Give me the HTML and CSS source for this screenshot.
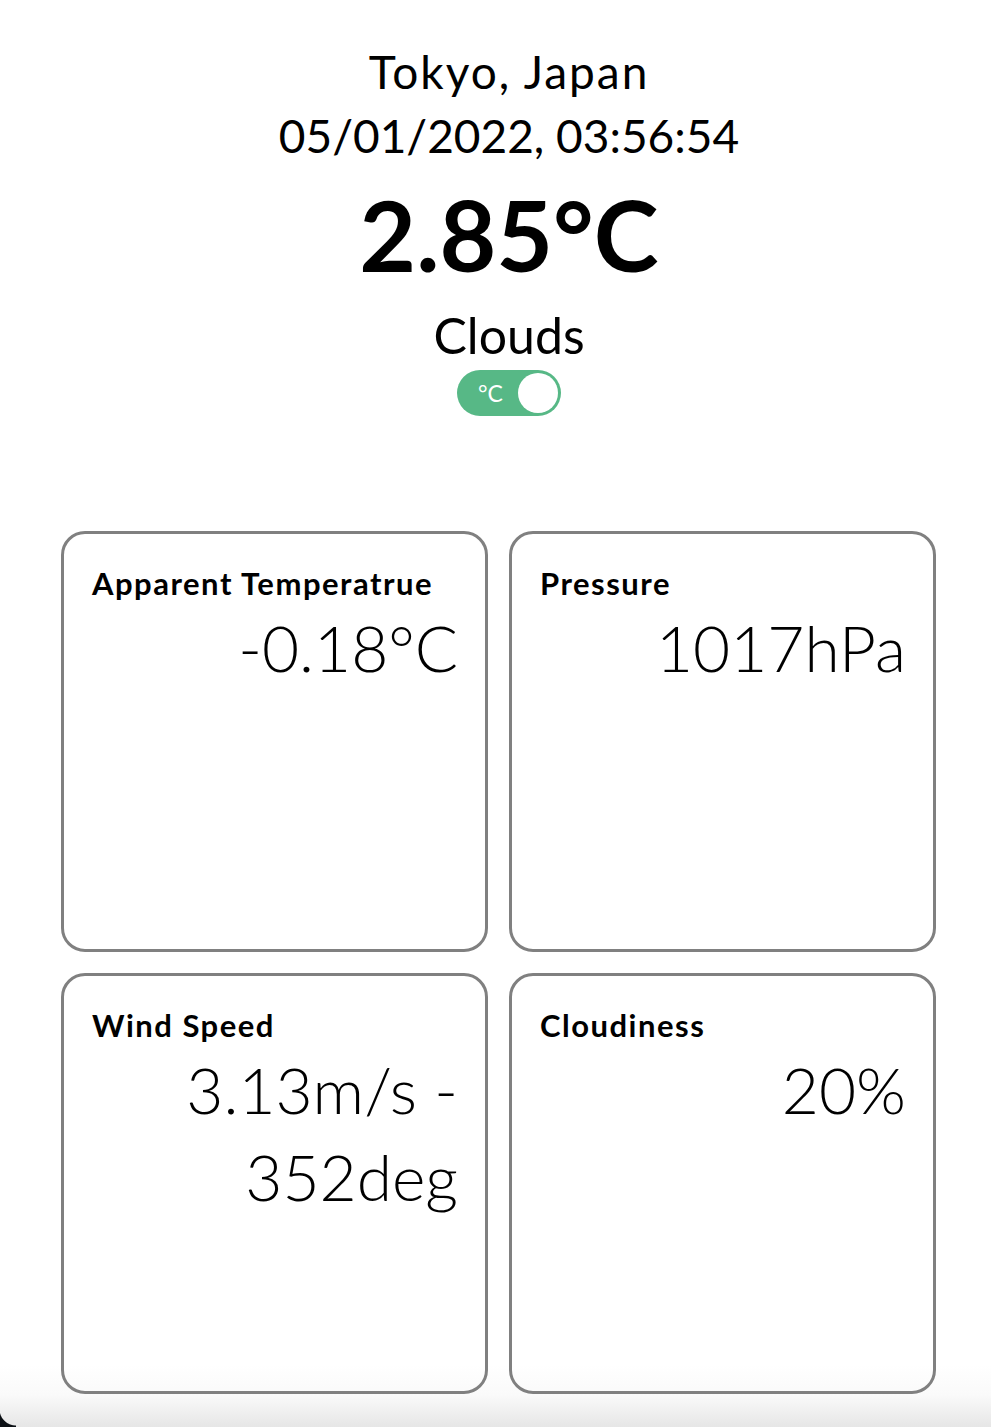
FILE: index.html
```html
<!DOCTYPE html>
<html lang="en">
<head>
<meta charset="utf-8">
<title>Weather</title>
<link rel="stylesheet" href="styles.css">
</head>
<body>
<main class="page">
  <header class="summary">
    <div class="city">Tokyo, Japan</div>
    <div class="datetime">05/01/2022, 03:56:54</div>
    <div class="temp">2.85°C</div>
    <div class="desc">Clouds</div>
    <div class="toggle">
      <span class="toggle-label">°C</span>
      <span class="knob"></span>
    </div>
  </header>
  <section class="grid">
    <div class="card">
      <div class="card-title">Apparent Temperatrue</div>
      <div class="card-value">-0.18°C</div>
    </div>
    <div class="card">
      <div class="card-title">Pressure</div>
      <div class="card-value">1017hPa</div>
    </div>
    <div class="card">
      <div class="card-title">Wind Speed</div>
      <div class="card-value">3.13m/s - 352deg</div>
    </div>
    <div class="card">
      <div class="card-title">Cloudiness</div>
      <div class="card-value">20%</div>
    </div>
  </section>
</main>
<div class="window-corner"></div>
</body>
</html>
```
FILE: styles.css
```css
html, body {
  margin: 0;
  padding: 0;
}
body {
  position: relative;
  width: 991px;
  height: 1427px;
  overflow: hidden;
  font-family: "Lato", "Noto Sans", sans-serif;
  color: #000;
  background: linear-gradient(to bottom, #ffffff 0, #ffffff 1365px, #fafafa 1395px, #e6e6e6 1427px);
}
.page {
  display: flex;
  flex-direction: column;
}
.summary {
  display: flex;
  flex-direction: column;
  align-items: center;
  padding-top: 40px;
  padding-left: 27px;
}
.city {
  font-size: 46px;
  line-height: 64px;
  letter-spacing: 2px;
}
.datetime {
  font-size: 46px;
  line-height: 64px;
}
.temp {
  margin-top: 10px;
  font-size: 98px;
  font-weight: 700;
  line-height: 112px;
}
.desc {
  margin-top: 13px;
  font-size: 50px;
  line-height: 64px;
}
.toggle {
  margin-top: 3px;
  width: 104px;
  height: 46px;
  border-radius: 23px;
  background: #57b886;
  display: flex;
  align-items: center;
  justify-content: space-between;
  padding: 0 3px 0 21px;
  box-sizing: border-box;
}
.toggle-label {
  color: #fff;
  font-size: 23px;
  font-weight: 400;
}
.knob {
  width: 40px;
  height: 40px;
  border-radius: 50%;
  background: #fff;
}
.grid {
  display: grid;
  grid-template-columns: 427px 427px;
  grid-template-rows: 421px 421px;
  column-gap: 21px;
  row-gap: 21px;
  margin-top: 115px;
  margin-left: 61px;
}
.card {
  box-sizing: border-box;
  border: 3px solid #808080;
  border-radius: 24px;
  padding: 28px 27px 20px 28px;
  display: flex;
  flex-direction: column;
}
.card-title {
  font-size: 31px;
  font-weight: 700;
  line-height: 42px;
  letter-spacing: 1.5px;
}
.card-value {
  text-align: right;
  font-size: 64px;
  font-weight: 300;
  line-height: 87px;
  padding-left: 50px;
}
.window-corner {
  position: absolute;
  left: 0;
  bottom: 0;
  width: 16px;
  height: 18px;
  background: radial-gradient(circle at 100% 0, transparent 16px, #0b0f14 17px);
}
```
